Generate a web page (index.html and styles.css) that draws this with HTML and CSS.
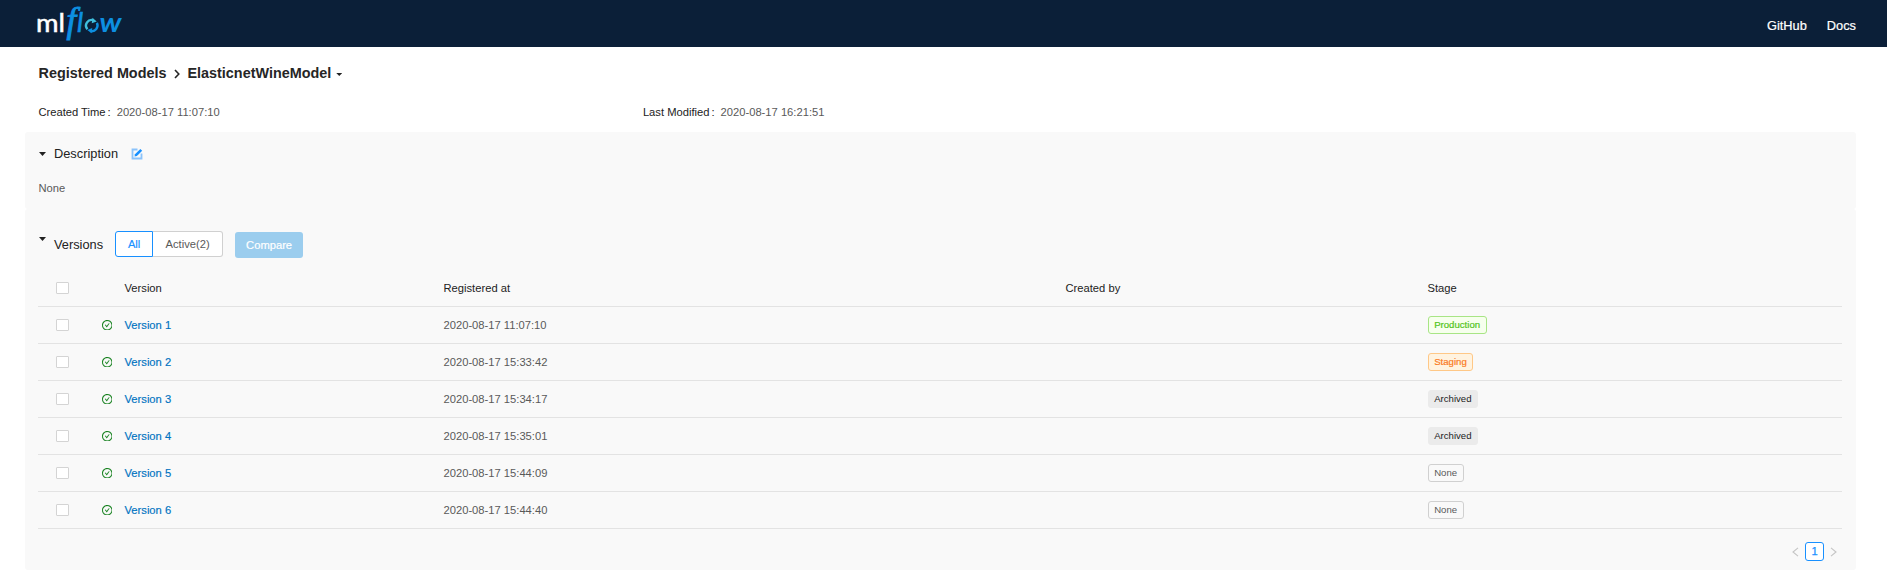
FILE: index.html
```html
<!DOCTYPE html>
<html lang="en">
<head>
<meta charset="utf-8">
<title>MLflow - ElasticnetWineModel</title>
<link rel="stylesheet" href="styles.css">
</head>
<body>
<svg width="0" height="0" class="sprite">
  <symbol id="ok" viewBox="64 64 896 896"><path d="M699 353h-46.9c-10.200 0-19.900 4.900-25.900 13.300L469 584.300l-71.200-98.800c-6-8.300-15.600-13.300-25.900-13.300H325c-6.500 0-10.300 7.400-6.500 12.700l124.600 172.800a31.800 31.800 0 0 0 51.700 0l210.600-292c3.900-5.300.1-12.700-6.400-12.700z"/><path d="M512 64C264.600 64 64 264.600 64 512s200.600 448 448 448 448-200.600 448-448S759.400 64 512 64zm0 820c-205.400 0-372-166.600-372-372s166.600-372 372-372 372 166.600 372 372-166.600 372-372 372z"/></symbol>
</svg>
<header class="topbar">
  <svg class="logo" width="90" height="40" viewBox="0 0 90 40" role="img" aria-label="mlflow">
    <text class="logo-ml" x="-2" y="27" textLength="29" lengthAdjust="spacingAndGlyphs">ml</text>
    <text class="logo-f" x="28.500" y="27">f</text>
    <text class="logo-l" x="39" y="27">l</text>
    <path class="ring ring-light" d="M49.400 24.300A5.700 5.700 0 0 1 55.500 15.200"/>
    <path class="ring" d="M58.900 17.900A5.700 5.700 0 0 1 52.500 26"/>
    <path class="tip-light" d="M54.500 12.700l4.200 3.800-5 1.700z"/>
    <path class="tip" d="M53.500 28.300l-4.200-3.400 5-1.800z"/>
    <text class="logo-w" x="61.500" y="27" textLength="22" lengthAdjust="spacingAndGlyphs">w</text>
  </svg>
  <nav class="nav"><a>GitHub</a><a>Docs</a></nav>
</header>
<main class="page">
  <h1 class="crumbs"><span>Registered Models</span><svg width="6" height="10" viewBox="0 0 6 10"><path d="M1 1l3.800 4L1 9"/></svg><span>ElasticnetWineModel</span><i class="caret small"></i></h1>
  <div class="meta">
    <div class="meta-item"><span class="label">Created Time<b>:</b></span>2020-08-17 11:07:10</div>
    <div class="meta-item"><span class="label">Last Modified<b>:</b></span>2020-08-17 16:21:51</div>
  </div>
  <section class="panel description">
    <div class="section-head"><i class="caret"></i><h2>Description</h2>
      <svg class="edit" width="12" height="12" viewBox="0 0 12 12"><path class="edit-box" d="M6.500 1.500h-5v9h9v-5"/><path class="edit-pen" d="M3.500 8.500l.5-2.300L9.300.9l1.900 1.900L5.900 8z"/></svg>
    </div>
    <p class="none">None</p>
  </section>
  <section class="panel versions">
    <div class="versions-head"><i class="caret"></i><h2>Versions</h2>
      <div class="radio"><button class="active">All</button><button>Active(2)</button></div>
      <button class="compare">Compare</button>
    </div>
    <div class="table">
      <div class="row head"><i class="box"></i><span></span><span>Version</span><span>Registered at</span><span>Created by</span><span>Stage</span></div>
      <div class="row"><i class="box"></i><svg class="ok"><use href="#ok"/></svg><a>Version 1</a><span>2020-08-17 11:07:10</span><span></span><span class="tag production">Production</span></div>
      <div class="row"><i class="box"></i><svg class="ok"><use href="#ok"/></svg><a>Version 2</a><span>2020-08-17 15:33:42</span><span></span><span class="tag staging">Staging</span></div>
      <div class="row"><i class="box"></i><svg class="ok"><use href="#ok"/></svg><a>Version 3</a><span>2020-08-17 15:34:17</span><span></span><span class="tag archived">Archived</span></div>
      <div class="row"><i class="box"></i><svg class="ok"><use href="#ok"/></svg><a>Version 4</a><span>2020-08-17 15:35:01</span><span></span><span class="tag archived">Archived</span></div>
      <div class="row"><i class="box"></i><svg class="ok"><use href="#ok"/></svg><a>Version 5</a><span>2020-08-17 15:44:09</span><span></span><span class="tag">None</span></div>
      <div class="row"><i class="box"></i><svg class="ok"><use href="#ok"/></svg><a>Version 6</a><span>2020-08-17 15:44:40</span><span></span><span class="tag">None</span></div>
    </div>
    <div class="pager">
      <svg width="7" height="10" viewBox="0 0 7 10"><path d="M6 .8L1 5l5 4.200"/></svg>
      <span class="current">1</span>
      <svg width="7" height="10" viewBox="0 0 7 10"><path d="M1 .8L6 5 1 9.200"/></svg>
    </div>
  </section>
</main>
</body>
</html>
```
FILE: styles.css
```css
* { box-sizing: border-box; }
body { margin: 0; height: 570px; overflow: hidden; background: #fff; color: #595959; font: 11.2px/16px "Liberation Sans", Arial, sans-serif; }
h1, h2, p { margin: 0; font-weight: 400; }
button { font: inherit; padding: 0; }
.sprite { display: block; }

.topbar { display: flex; justify-content: space-between; height: 47px; padding: 5px 31px 0 38px; background: #0b1f38; }
.logo { display: block; overflow: visible; }
.logo text { font-family: Lato, sans-serif; }
.logo-ml { font-size: 25px; fill: #fff; stroke: #fff; stroke-width: .5; }
.logo .logo-f { font-family: "Liberation Serif", serif; font-size: 35px; font-style: italic; fill: #0d8fe0; stroke: #0d8fe0; stroke-width: .9; }
.logo-l { font-size: 27px; font-style: italic; fill: #0d8fe0; stroke: #0d8fe0; stroke-width: .6; }
.logo-w { font-size: 26px; font-style: italic; font-weight: 700; fill: #0d8fe0; }
.ring { fill: none; stroke: #0d8fe0; stroke-width: 2.4; }
.ring-light { stroke: #3fc0de; }
.tip { fill: #0d8fe0; }
.tip-light { fill: #3fc0de; }
.nav { display: flex; gap: 20px; padding-top: 13px; font-size: 12.8px; color: #fff; -webkit-text-stroke: .2px #fff; }

.page { padding: 0 31px 0 25px; }
.crumbs { display: flex; align-items: center; height: 20px; margin: 16px 0 0 13.500px; font-size: 14.4px; font-weight: 700; color: #262626; }
.crumbs svg { margin: 2px 7px 0 8px; fill: none; stroke: #262626; stroke-width: 1.6; }
.caret { display: block; width: 7px; height: 4px; background: #222; clip-path: polygon(0 0, 100% 0, 50% 100%); }
.caret.small { width: 6px; height: 3px; margin: 3px 0 0 5px; }
.meta { display: flex; margin: 21px 0 0 13.400px; height: 28px; }
.meta-item { width: 604.500px; line-height: 16px; }
.label { color: #222; margin-right: 6px; }
.label b { font-weight: 400; margin-left: 2px; }

.panel { background: #f9f9f9; border-radius: 3px; }
.description { height: 77px; padding: 13px 13px 0; }
.section-head { display: flex; align-items: center; height: 18px; padding-left: 1px; }
h2 { font-size: 12.8px; color: #222; margin-left: 8px; }
.edit { margin: 0 0 0 13px; }
.edit-box { fill: none; stroke: #8bc3fb; stroke-width: 1.8; }
.edit-pen { fill: #1890ff; }
.none { margin: 17px 0 0 .5px; }
.versions { height: 361px; padding: 22px 14px 0 13px; }
.versions-head { display: flex; height: 27px; padding-left: 1px; }
.versions-head .caret { margin-top: 6px; }
.versions-head h2 { line-height: 27px; }
.radio { display: flex; height: 26px; margin-left: 12px; }
.radio button { width: 70px; border: 1px solid #d0d0d0; border-left: 0; border-radius: 0 3px 3px 0; background: #fff; color: #595959; }
.radio .active { width: 38px; border: 1px solid #1890ff; border-radius: 3px 0 0 3px; color: #1890ff; -webkit-text-stroke: .15px; }
.compare { width: 68px; height: 26px; margin: 1px 0 0 12px; border: 0; border-radius: 3px; background: #9bcdee; color: #fff; -webkit-text-stroke: .2px #fff; }
.table { margin-top: 12px; }
.row { display: grid; grid-template-columns: 63.500px 23px 319px 622px 362px 1fr; align-items: center; height: 37px; border-bottom: 1px solid #e3e3e3; }
.row.head { color: #222; }
.box { width: 13px; height: 12px; margin-left: 18px; border: 1px solid #d4d4d4; border-radius: 1px; background: #fff; }
.ok { width: 10.500px; height: 10.500px; fill: #178220; stroke: #178220; stroke-width: 12; }
.row a { color: #0073c1; -webkit-text-stroke: .15px #0073c1; }
.tag { justify-self: start; height: 18px; padding: 0 5.700px; border: 1px solid #d0d0d0; border-radius: 3px; font-size: 9.6px; line-height: 16px; color: #595959; }
.production { color: #52c41a; background: #f6ffed; border-color: #a8e585; -webkit-text-stroke: .2px; }
.staging { color: #fa7a1e; background: #fff3e0; border-color: #ffc887; -webkit-text-stroke: .2px; }
.archived { color: #222; background: #ebebeb; border-color: #ebebeb; }
.pager { display: flex; align-items: center; justify-content: flex-end; gap: 6px; margin-top: 13px; padding-right: 5px; }
.pager svg { fill: none; stroke: #c4c4c4; stroke-width: 1.1; }
.current { width: 19px; height: 19px; border: 1px solid #1890ff; border-radius: 3px; background: #fff; color: #1890ff; text-align: center; line-height: 17px; -webkit-text-stroke: .25px; }
```
